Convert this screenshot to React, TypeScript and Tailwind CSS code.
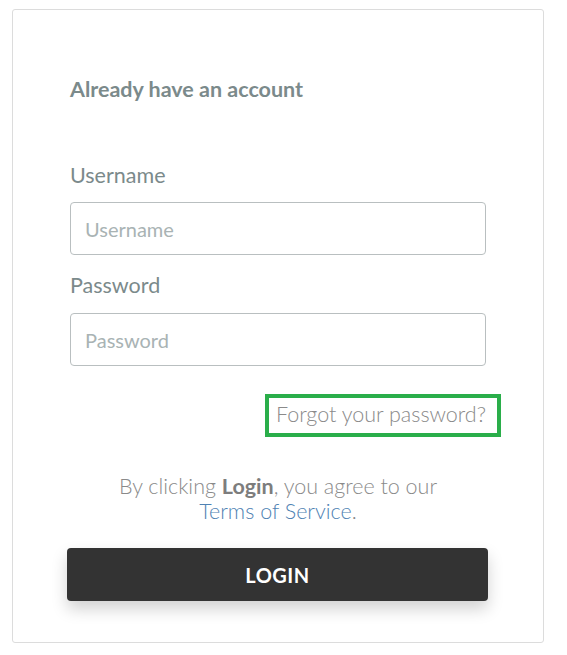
export default function App() {
  return (
    <div className="min-h-screen bg-white pt-[9px] pl-[12px]" style={{ fontFamily: 'Lato, "Noto Sans", sans-serif' }}>
      <div className="w-[532px] h-[634px] rounded-[3px] border border-[#dcdcdc] bg-white pl-[57px] pt-[66px]">
        <div className="w-[416px]">
          <h2 className="text-[21.5px] leading-[26px] font-bold text-[#7b8a8b]">Already have an account</h2>

          <form className="mt-[60px]" onSubmit={(e) => e.preventDefault()}>
            <label className="block text-[21.5px] leading-[26px] text-[#7b8a8b]">Username</label>
            <input
              type="text"
              placeholder="Username"
              className="mt-[14px] block w-full h-[53px] rounded-[4px] border border-[#b9bfc0] px-[14px] text-[20px] text-[#555] placeholder:text-[#a9b3b4] outline-none"
            />

            <label className="mt-[17px] block text-[21.5px] leading-[26px] text-[#7b8a8b]">Password</label>
            <input
              type="password"
              placeholder="Password"
              className="mt-[15px] block w-full h-[53px] rounded-[4px] border border-[#b9bfc0] px-[14px] text-[20px] text-[#555] placeholder:text-[#a9b3b4] outline-none"
            />

            <div className="mt-[28px] flex justify-end mr-[-15px]">
              <a
                href="#"
                className="block border-4 border-[#2aae4a] pl-[7px] pr-[11px] pt-[3px] pb-[6px] text-[21.5px] leading-[26px] font-light text-[#8a8a8a]"
              >
                Forgot your password?
              </a>
            </div>

            <p className="mt-[37px] text-center text-[21.5px] leading-[25px] font-light text-[#8a8a8a]">
              By clicking <span className="font-bold text-[#7d7d7d]">Login</span>, you agree to our
              <br />
              <a href="#" className="text-[#4f82b3]">Terms of Service</a>.
            </p>

            <button
              type="submit"
              className="mt-[24px] ml-[-3px] block w-[421px] h-[53px] rounded-[4px] bg-[#333333] text-white text-[20px] font-bold tracking-[0.5px] shadow-[0_8px_16px_rgba(0,0,0,0.18)]"
            >
              LOGIN
            </button>
          </form>
        </div>
      </div>
    </div>
  );
}
